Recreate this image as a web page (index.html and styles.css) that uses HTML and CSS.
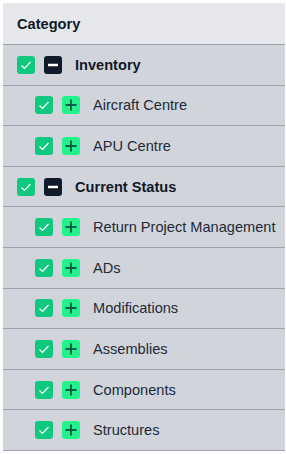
FILE: index.html
```html
<!DOCTYPE html>
<html lang="en">
<head>
    <meta charset="UTF-8">
    <meta name="viewport" content="width=device-width, initial-scale=1.0">
    <title>Category</title>
    <link rel="stylesheet" href="styles.css">
</head>
<body>
    <div class="tree">
        <div class="tree-header">Category</div>

        <div class="row parent">
            <span class="check"><svg viewBox="0 0 18 18"><path d="M4.5 9.5l3 3 6-6.5"/></svg></span>
            <span class="toggle minus"><svg viewBox="0 0 18 18"><path d="M4 9h10"/></svg></span>
            <span class="label">Inventory</span>
        </div>
        <div class="row child">
            <span class="check"><svg viewBox="0 0 18 18"><path d="M4.5 9.5l3 3 6-6.5"/></svg></span>
            <span class="toggle plus"><svg viewBox="0 0 18 18"><path d="M9 3.5v11M3.5 9h11"/></svg></span>
            <span class="label">Aircraft Centre</span>
        </div>
        <div class="row child">
            <span class="check"><svg viewBox="0 0 18 18"><path d="M4.5 9.5l3 3 6-6.5"/></svg></span>
            <span class="toggle plus"><svg viewBox="0 0 18 18"><path d="M9 3.5v11M3.5 9h11"/></svg></span>
            <span class="label">APU Centre</span>
        </div>

        <div class="row parent">
            <span class="check"><svg viewBox="0 0 18 18"><path d="M4.5 9.5l3 3 6-6.5"/></svg></span>
            <span class="toggle minus"><svg viewBox="0 0 18 18"><path d="M4 9h10"/></svg></span>
            <span class="label">Current Status</span>
        </div>
        <div class="row child">
            <span class="check"><svg viewBox="0 0 18 18"><path d="M4.5 9.5l3 3 6-6.5"/></svg></span>
            <span class="toggle plus"><svg viewBox="0 0 18 18"><path d="M9 3.5v11M3.5 9h11"/></svg></span>
            <span class="label">Return Project Management</span>
        </div>
        <div class="row child">
            <span class="check"><svg viewBox="0 0 18 18"><path d="M4.5 9.5l3 3 6-6.5"/></svg></span>
            <span class="toggle plus"><svg viewBox="0 0 18 18"><path d="M9 3.5v11M3.5 9h11"/></svg></span>
            <span class="label">ADs</span>
        </div>
        <div class="row child">
            <span class="check"><svg viewBox="0 0 18 18"><path d="M4.5 9.5l3 3 6-6.5"/></svg></span>
            <span class="toggle plus"><svg viewBox="0 0 18 18"><path d="M9 3.5v11M3.5 9h11"/></svg></span>
            <span class="label">Modifications</span>
        </div>
        <div class="row child">
            <span class="check"><svg viewBox="0 0 18 18"><path d="M4.5 9.5l3 3 6-6.5"/></svg></span>
            <span class="toggle plus"><svg viewBox="0 0 18 18"><path d="M9 3.5v11M3.5 9h11"/></svg></span>
            <span class="label">Assemblies</span>
        </div>
        <div class="row child">
            <span class="check"><svg viewBox="0 0 18 18"><path d="M4.5 9.5l3 3 6-6.5"/></svg></span>
            <span class="toggle plus"><svg viewBox="0 0 18 18"><path d="M9 3.5v11M3.5 9h11"/></svg></span>
            <span class="label">Components</span>
        </div>
        <div class="row child">
            <span class="check"><svg viewBox="0 0 18 18"><path d="M4.5 9.5l3 3 6-6.5"/></svg></span>
            <span class="toggle plus"><svg viewBox="0 0 18 18"><path d="M9 3.5v11M3.5 9h11"/></svg></span>
            <span class="label">Structures</span>
        </div>
    </div>
</body>
</html>
```

FILE: styles.css
```css
body {
    margin: 3px 1px 0 3px;
    background-color: #ffffff;
    font-family: "Liberation Sans", Arial, sans-serif;
    color: #1f2937;
}
.tree {
    background-color: #e5e7eb;
}
.tree-header {
    height: 41px;
    padding-left: 14px;
    display: flex;
    align-items: center;
    font-size: 14.6px;
    font-weight: bold;
    color: #111827;
    border-bottom: 1px solid #9ca3af;
}
.row {
    height: 39.6px;
    display: flex;
    align-items: center;
    background-color: #d1d5db;
    border-bottom: 1px solid #9ca3af;
    font-size: 14.6px;
}
.parent {
    padding-left: 14px;
}
.parent .label {
    font-weight: bold;
    color: #111827;
}
.child {
    padding-left: 32px;
}
.check, .toggle {
    width: 18px;
    height: 18px;
    border-radius: 3px;
    display: flex;
    flex-shrink: 0;
}
.check svg, .toggle svg {
    width: 18px;
    height: 18px;
    fill: none;
    stroke-linecap: butt;
}
.check {
    background-color: #10c97f;
    margin-right: 9px;
}
.check path {
    stroke: #ffffff;
    stroke-width: 1.2;
}
.minus {
    background-color: #0f1b2a;
}
.minus path {
    stroke: #ffffff;
    stroke-width: 2.5;
}
.plus {
    background-color: #22f28c;
}
.plus path {
    stroke: #065f46;
    stroke-width: 2;
}
.label {
    margin-left: 13px;
    white-space: nowrap;
}
```
